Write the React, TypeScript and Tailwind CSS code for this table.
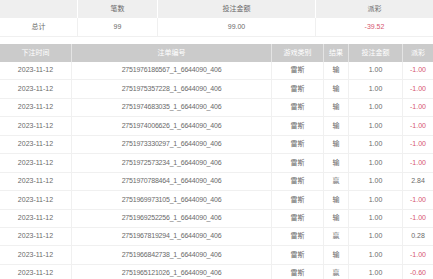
const rows = [
  { id: "2751976186567", result: "输", payout: "-1.00" },
  { id: "2751975357228", result: "输", payout: "-1.00" },
  { id: "2751974683035", result: "输", payout: "-1.00" },
  { id: "2751974006626", result: "输", payout: "-1.00" },
  { id: "2751973330297", result: "输", payout: "-1.00" },
  { id: "2751972573234", result: "输", payout: "-1.00" },
  { id: "2751970788464", result: "赢", payout: "2.84" },
  { id: "2751969973105", result: "输", payout: "-1.00" },
  { id: "2751969252256", result: "输", payout: "-1.00" },
  { id: "2751967819294", result: "赢", payout: "0.28" },
  { id: "2751966842738", result: "输", payout: "-1.00" },
  { id: "2751965121026", result: "赢", payout: "-0.60" },
];

const FONT = "font-['Liberation_Sans','Noto_Sans_CJK_SC',sans-serif]";

export default function App() {
  return (
    <div className={`h-[279px] w-[433px] overflow-hidden bg-white text-[7px] text-[#6a6a6a] ${FONT}`}>
      {/* summary */}
      <div className="grid grid-cols-[77px_80px_158px_118px]">
        <div className="h-[18px] bg-[#efefef]" />
        <div className="flex h-[18px] items-center justify-center border-l border-white bg-[#efefef]">笔数</div>
        <div className="flex h-[18px] items-center justify-center border-l border-white bg-[#efefef]">投注金额</div>
        <div className="flex h-[18px] items-center justify-center border-l border-white bg-[#efefef]">派彩</div>
        <div className="flex h-[19px] items-center justify-center border-b border-[#f0f0f0]">总计</div>
        <div className="flex h-[19px] items-center justify-center border-b border-l border-[#f0f0f0]">99</div>
        <div className="flex h-[19px] items-center justify-center border-b border-l border-[#f0f0f0]">99.00</div>
        <div className="flex h-[19px] items-center justify-center border-b border-l border-[#f0f0f0] text-[#d65670]">-39.52</div>
      </div>

      {/* detail */}
      <div className="mt-[7px] grid grid-cols-[71px_200px_52px_25px_54px_31px]">
        {["下注时间", "注单编号", "游戏类别", "结果", "投注金额", "派彩"].map((h, i) => (
          <div
            key={h}
            className={`flex h-[18px] items-center justify-center bg-[#cbcbcb] text-white ${i > 0 ? "border-l border-[#e4e4e4]" : ""}`}
          >
            {h}
          </div>
        ))}
        {rows.map((r) => (
          <div key={r.id} className="contents">
            <div className="flex h-[18.45px] items-center justify-center border-b border-[#f0f0f0]">2023-11-12</div>
            <div className="flex h-[18.45px] items-center justify-center border-b border-l border-[#f0f0f0] tracking-[-0.2px]">
              {r.id}_1_6644090_406
            </div>
            <div className="flex h-[18.45px] items-center justify-center border-b border-l border-[#f0f0f0]">雷斯</div>
            <div className="flex h-[18.45px] items-center justify-center border-b border-l border-[#f0f0f0]">{r.result}</div>
            <div className="flex h-[18.45px] items-center justify-center border-b border-l border-[#f0f0f0]">1.00</div>
            <div
              className={`flex h-[18.45px] items-center justify-center border-b border-l border-[#f0f0f0] ${
                r.payout.startsWith("-") ? "text-[#d65670]" : ""
              }`}
            >
              {r.payout}
            </div>
          </div>
        ))}
      </div>
    </div>
  );
}
